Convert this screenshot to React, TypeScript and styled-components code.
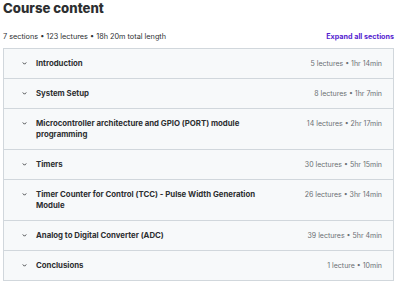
import React from 'react';
import styled, { createGlobalStyle } from 'styled-components';

const GlobalStyle = createGlobalStyle`
  body {
    margin: 0;
    background: #fff;
    font-family: Inter, 'Liberation Sans', sans-serif;
    color: #2d2f31;
  }
`;

const Page = styled.div`
  width: 400px;
  padding: 0 6px 0 3px;
  box-sizing: border-box;
`;

const Title = styled.h2`
  margin: 0;
  font-size: 13.2px;
  font-weight: 800;
  line-height: 17px;
`;

const SummaryBar = styled.div`
  display: flex;
  justify-content: space-between;
  align-items: center;
  margin-top: 12px;
  height: 14px;
  margin-bottom: 5px;
`;

const Summary = styled.span`
  font-size: 7.3px;
  color: #2d2f31;
`;

const ExpandLink = styled.button`
  border: none;
  background: none;
  padding: 0;
  font-family: inherit;
  font-size: 7.2px;
  font-weight: 700;
  color: #5624d0;
  cursor: pointer;
`;

const Sections = styled.div`
  border: 1px solid #d1d7dc;
`;

const Row = styled.div`
  display: flex;
  align-items: flex-start;
  padding: 9px 11px 9px 17px;
  background: #f7f9fa;
  border-top: 1px solid #d1d7dc;

  &:first-child {
    border-top: none;
  }
`;

const Chevron = styled.svg`
  width: 7px;
  height: 11px;
  flex-shrink: 0;
  margin-right: 8px;
`;

const SectionTitle = styled.span`
  flex: 1;
  font-size: 7.8px;
  font-weight: 700;
  line-height: 11px;
  padding-right: 20px;
`;

const Meta = styled.span`
  font-size: 7px;
  line-height: 11px;
  color: #6a6f73;
  white-space: nowrap;
`;

const sections = [
  { title: 'Introduction', meta: '5 lectures • 1hr 14min' },
  { title: 'System Setup', meta: '8 lectures • 1hr 7min' },
  {
    title: 'Microcontroller architecture and GPIO (PORT) module programming',
    meta: '14 lectures • 2hr 17min',
  },
  { title: 'Timers', meta: '30 lectures • 5hr 15min' },
  {
    title: 'Timer Counter for Control (TCC) - Pulse Width Generation Module',
    meta: '26 lectures • 3hr 14min',
  },
  { title: 'Analog to Digital Converter (ADC)', meta: '39 lectures • 5hr 4min' },
  { title: 'Conclusions', meta: '1 lecture • 10min' },
];

const App = () => {
  return (
    <Page>
      <GlobalStyle />
      <Title>Course content</Title>
      <SummaryBar>
        <Summary>7 sections • 123 lectures • 18h 20m total length</Summary>
        <ExpandLink>Expand all sections</ExpandLink>
      </SummaryBar>
      <Sections>
        {sections.map((s) => (
          <Row key={s.title}>
            <Chevron viewBox="0 0 10 16">
              <path d="M2.5 6.5 L5 9 L7.5 6.5" fill="none" stroke="#2d2f31" strokeWidth="1.3" />
            </Chevron>
            <SectionTitle>{s.title}</SectionTitle>
            <Meta>{s.meta}</Meta>
          </Row>
        ))}
      </Sections>
    </Page>
  );
};

export default App;
